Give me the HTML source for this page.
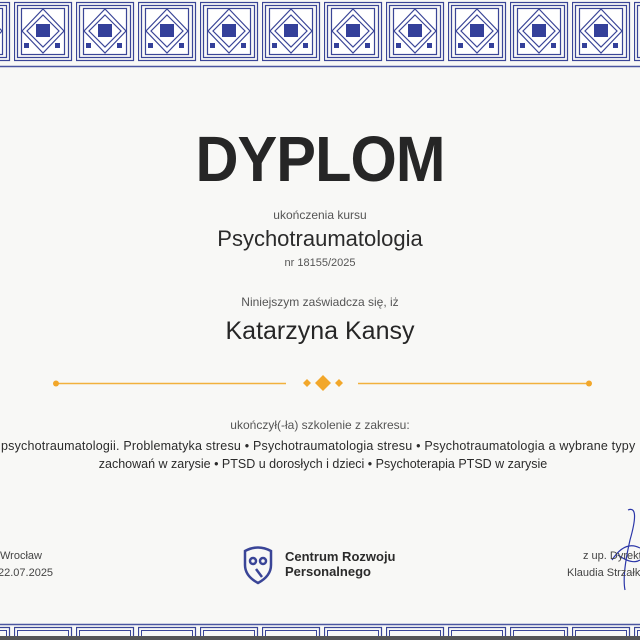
<!DOCTYPE html>
<html><head><meta charset="utf-8"><style>
*{margin:0;padding:0;box-sizing:border-box}
body{width:640px;height:640px;overflow:hidden;background:#f8f8f6;font-family:"Liberation Sans",sans-serif;color:#2b2b2b;position:relative}
.t{position:absolute;left:0;width:640px;text-align:center;white-space:nowrap}
</style></head><body>
<svg width="640" height="640" style="position:absolute;left:0;top:0">
<defs>
<pattern id="tile" x="-48" y="0" width="62" height="70" patternUnits="userSpaceOnUse">
<g fill="none" stroke="#3a4597" stroke-width="1.2">
<rect x="0.5" y="2.5" width="57" height="58"/>
<rect x="3.5" y="5.5" width="51" height="52"/>
<rect x="7.5" y="8.5" width="43" height="46" fill="#fff"/>
<path d="M29 9 L50 31 L29 53 L8 31 Z"/>
<path d="M29 15 L45 31 L29 47 L13 31 Z"/>
</g>
<rect x="22" y="24" width="14" height="13" fill="#34409a"/>
<rect x="10" y="43" width="5" height="5" fill="#34409a"/>
<rect x="41" y="43" width="5" height="5" fill="#34409a"/>
</pattern>
<pattern id="btile" x="-48" y="0" width="62" height="20" patternUnits="userSpaceOnUse">
<rect x="0.5" y="7.5" width="57" height="14" fill="none" stroke="#3a4597" stroke-width="1.2"/>
<rect x="3.5" y="10.5" width="51" height="10" fill="none" stroke="#3a4597" stroke-width="1"/>
</pattern>
</defs>
<rect x="0" y="0" width="640" height="63" fill="url(#tile)"/>
<line x1="0" y1="66.5" x2="640" y2="66.5" stroke="#4a55a0" stroke-width="1.5"/>
<line x1="0" y1="624.5" x2="640" y2="624.5" stroke="#4a55a0" stroke-width="1.5"/>
<rect x="0" y="624" width="640" height="16" fill="url(#btile)"/>
<rect x="0" y="636" width="640" height="4" fill="#555"/>
<line x1="56" y1="383.5" x2="286" y2="383.5" stroke="#f2b13c" stroke-width="1.5"/>
<line x1="358" y1="383.5" x2="589" y2="383.5" stroke="#f2b13c" stroke-width="1.5"/>
<circle cx="56" cy="383.5" r="3" fill="#f2a72a"/>
<circle cx="589" cy="383.5" r="3" fill="#f2a72a"/>
<path d="M307 379 L311 383 L307 387 L303 383Z M323 375 L331 383 L323 391 L315 383Z M339 379 L343 383 L339 387 L335 383Z" fill="#f2a72a"/>
<g fill="none" stroke="#3a4597" stroke-width="2.5">
<path d="M245 551 Q258 544 271 551 L271 565 Q271 576 258 583 Q245 576 245 565 Z"/>
<circle cx="253" cy="561" r="3"/><circle cx="263" cy="561" r="3"/>
<path d="M256 569 L262 577"/>
</g>
<path d="M628 510 Q640 505 630 540 Q622 575 625 590 M612 560 Q625 540 640 548 M618 555 Q632 565 640 560" fill="none" stroke="#2b36a8" stroke-width="1.2"/>
</svg>
<div class="t" style="top:122px;font-size:64px;font-weight:bold;letter-spacing:-1px;color:#262626;transform:scaleX(0.93)">DYPLOM</div>
<div class="t" style="top:208px;font-size:12px;color:#555">ukończenia kursu</div>
<div class="t" style="top:226px;font-size:22px;color:#2b2b2b">Psychotraumatologia</div>
<div class="t" style="top:257px;font-size:11px;color:#555">nr 18155/2025</div>
<div class="t" style="top:295px;font-size:12px;color:#555">Niniejszym zaświadcza się, iż</div>
<div class="t" style="top:317px;font-size:25px;color:#262626">Katarzyna Kansy</div>
<div class="t" style="top:418px;font-size:12px;color:#555">ukończył(-ła) szkolenie z zakresu:</div>
<div style="position:absolute;left:1px;top:439px;font-size:12.5px;letter-spacing:0.2px;white-space:nowrap;color:#2b2b2b">psychotraumatologii. Problematyka stresu • Psychotraumatologia stresu • Psychotraumatologia a wybrane typy</div>
<div class="t" style="top:457px;font-size:12.5px;left:3px">zachowań w zarysie • PTSD u dorosłych i dzieci • Psychoterapia PTSD w zarysie</div>
<div style="position:absolute;left:0;top:550px;font-size:11px;color:#444">Wrocław</div>
<div style="position:absolute;left:-2px;top:567px;font-size:11px;color:#444">22.07.2025</div>
<div style="position:absolute;left:583px;top:550px;font-size:11px;color:#444;white-space:nowrap">z up. Dyrektora</div>
<div style="position:absolute;left:567px;top:567px;font-size:11px;color:#444;white-space:nowrap">Klaudia Strzałkowska</div>
<div style="position:absolute;left:285px;top:549px;font-size:13px;font-weight:bold;color:#2b2b2b;line-height:15px">Centrum Rozwoju<br>Personalnego</div>
</body></html>
